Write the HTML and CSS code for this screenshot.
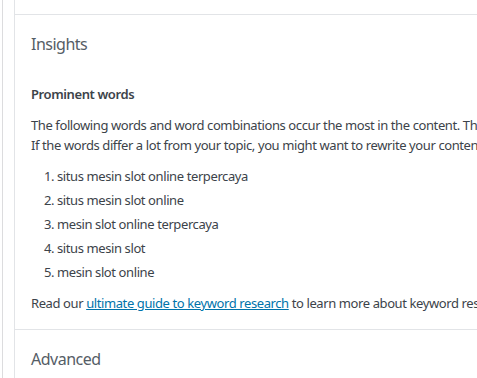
FILE: index.html
```html
<!DOCTYPE html>
<html>
<head>
    <title>Insights</title>
    <link rel="stylesheet" href="styles.css">
</head>
<body>
    <div class="frame">
        <div class="panel">
            <div class="top-space"></div>
            <div class="section">
                <h2 class="section-title">Insights</h2>
                <h3 class="sub-title">Prominent words</h3>
                <p class="intro">The following words and word combinations occur the most in the content. These give an indication of what your content focuses on.<br>If the words differ a lot from your topic, you might want to rewrite your content accordingly.</p>
                <ol class="words">
                    <li>situs mesin slot online terpercaya</li>
                    <li>situs mesin slot online</li>
                    <li>mesin slot online terpercaya</li>
                    <li>situs mesin slot</li>
                    <li>mesin slot online</li>
                </ol>
                <p class="read-more">Read our <a href="#">ultimate guide to keyword research</a> to learn more about keyword research and keyword strategy.</p>
            </div>
            <div class="section">
                <h2 class="section-title">Advanced</h2>
            </div>
        </div>
    </div>
</body>
</html>
```

FILE: styles.css
```css
body {
    margin: 0;
    overflow: hidden;
    background: #fff;
    font-family: "Noto Sans", "Open Sans", sans-serif;
    font-size: 13px;
    letter-spacing: -0.4px;
    color: #3c434a;
}

.frame {
    margin-left: 2px;
    padding-left: 11px;
    border-left: 1px solid #dcdcde;
    min-height: 378px;
}

.panel {
    border-left: 1px solid #e2e4e7;
    min-height: 378px;
    width: 900px;
}

.top-space {
    height: 14px;
}

.section {
    border-top: 1px solid #e2e4e7;
    padding: 0 16px 0 16px;
}

.section-title {
    margin: 0;
    padding: 17px 0 0 0;
    font-size: 16px;
    font-weight: 400;
    letter-spacing: -0.5px;
    color: #555d66;
    line-height: 24px;
}

.sub-title {
    margin: 28px 0 0 0;
    font-size: 13px;
    font-weight: 600;
    line-height: 20px;
    color: #3c434a;
}

.intro {
    margin: 12px 0 0 0;
    line-height: 19.5px;
    white-space: nowrap;
}

.words {
    margin: 12px 0 0 0;
    padding-left: 26px;
}

.words li {
    line-height: 18px;
    margin-bottom: 6px;
}

.read-more {
    margin: 13px 0 0 0;
    padding-bottom: 15px;
    line-height: 19.5px;
    white-space: nowrap;
}

.read-more a {
    color: #0073aa;
}
```
